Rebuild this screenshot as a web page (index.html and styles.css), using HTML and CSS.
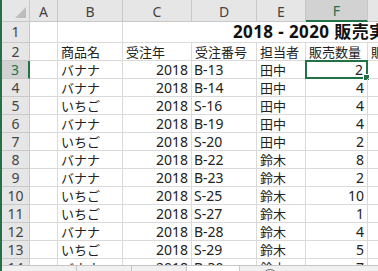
FILE: index.html
```html
<!DOCTYPE html>
<html lang="ja">
<head>
  <meta charset="UTF-8">
  <title>販売実績 - Excel</title>
  <link rel="stylesheet" href="styles.css">
</head>
<body>
  <div class="sheet">
    <div class="grid">
      <!-- column headers -->
      <div class="corner"><span class="tri"></span></div>
      <div class="colhead">A</div>
      <div class="colhead">B</div>
      <div class="colhead">C</div>
      <div class="colhead">D</div>
      <div class="colhead">E</div>
      <div class="colhead sel">F</div>
      <div class="colhead"></div>

      <!-- row 1 -->
      <div class="rowhead">1</div>
      <div class="cell"></div>
      <div class="cell"></div>
      <div class="cell title">2018 - 2020 販売実績</div>

      <!-- row 2 -->
      <div class="rowhead">2</div>
      <div class="cell"></div>
      <div class="cell jp">商品名</div>
      <div class="cell jp">受注年</div>
      <div class="cell jp">受注番号</div>
      <div class="cell jp">担当者</div>
      <div class="cell jp">販売数量</div>
      <div class="cell jp">販売</div>
    </div>

    <div id="rows" class="grid"></div>
  </div>

  <div class="tabbar">
    <div class="tab">三読</div>
    <div class="tab">2018</div>
    <div class="tab">2019</div>
    <div class="tab active">販売</div>
    <div class="addsheet">+</div>
  </div>

  <script>
    const data = [
      [3, "バナナ", 2018, "B-13", "田中", 2],
      [4, "バナナ", 2018, "B-14", "田中", 4],
      [5, "いちご", 2018, "S-16", "田中", 4],
      [6, "バナナ", 2018, "B-19", "田中", 4],
      [7, "いちご", 2018, "S-20", "田中", 2],
      [8, "バナナ", 2018, "B-22", "鈴木", 8],
      [9, "バナナ", 2018, "B-23", "鈴木", 2],
      [10, "いちご", 2018, "S-25", "鈴木", 10],
      [11, "いちご", 2018, "S-27", "鈴木", 1],
      [12, "バナナ", 2018, "B-28", "鈴木", 4],
      [13, "いちご", 2018, "S-29", "鈴木", 5],
      [14, "バナナ", 2018, "B-30", "鈴木", 7]
    ];

    const rows = document.getElementById("rows");
    data.forEach(r => {
      const sel = r[0] === 3;
      rows.innerHTML += `
        <div class="rowhead${sel ? " sel" : ""}">${r[0]}</div>
        <div class="cell"></div>
        <div class="cell jp">${r[1]}</div>
        <div class="cell num">${r[2]}</div>
        <div class="cell">${r[3]}</div>
        <div class="cell jp">${r[4]}</div>
        <div class="cell num${sel ? " active" : ""}">${r[5]}</div>
        <div class="cell"></div>
      `;
    });
  </script>
</body>
</html>
```

FILE: styles.css
```css
* {
  box-sizing: border-box;
}
body {
  margin: 0;
  width: 378px;
  height: 271px;
  overflow: hidden;
  font-family: "Noto Sans", "Noto Sans CJK JP", sans-serif;
  font-size: 14px;
  color: #222;
  background-color: white;
  border-left: 2px solid #217346;
}
.sheet {
  height: 265px;
  overflow: hidden;
}
.grid {
  display: grid;
  grid-template-columns: 28px 28px 65px 69px 65px 49px 62px 30px;
  grid-auto-rows: 18px;
}
.grid:first-child {
  grid-template-rows: 22px 21px 18px;
}
.corner, .colhead, .rowhead {
  background-color: #e6e6e6;
  color: #444;
  border-right: 1px solid #c8c8c8;
  border-bottom: 1px solid #c8c8c8;
}
.corner {
  position: relative;
}
.tri {
  position: absolute;
  right: 3px;
  bottom: 3px;
  width: 0;
  height: 0;
  border-left: 11px solid transparent;
  border-bottom: 11px solid #bdbdbd;
}
.colhead {
  display: flex;
  align-items: center;
  justify-content: center;
  padding-top: 1px;
}
.colhead.sel {
  background-color: #d2d2d2;
  color: #217346;
  border-bottom: 2px solid #217346;
}
.rowhead {
  display: flex;
  align-items: center;
  justify-content: center;
  line-height: 1;
}
.rowhead.sel {
  background-color: #d2d2d2;
  color: #217346;
  border-right: 2px solid #217346;
}
.cell {
  border-right: 1px solid #dadada;
  border-bottom: 1px solid #dadada;
  padding: 0 2px;
  line-height: 17px;
  white-space: nowrap;
  overflow: hidden;
  position: relative;
}
.jp {
  font-family: "Noto Sans CJK JP", sans-serif;
  font-size: 13px;
  padding-left: 3px;
}
.num {
  text-align: right;
  padding-right: 3px;
}
.cell.active {
  border: 2px solid #217346;
  margin: -1px 0 0 -1px;
  line-height: 15px;
  overflow: visible;
}
.cell.active::after {
  content: "";
  position: absolute;
  right: -4px;
  bottom: -4px;
  width: 5px;
  height: 5px;
  background-color: #217346;
  border: 1px solid white;
}
.title {
  grid-column: 4 / -1;
  border-right: none;
  padding-left: 110px;
  font-family: "Noto Sans", "Noto Sans CJK JP", sans-serif;
  font-size: 17px;
  font-weight: bold;
  letter-spacing: 0.4px;
  line-height: 20px;
  color: #111;
}
.tabbar {
  display: flex;
  height: 26px;
  background-color: #f0f0f0;
  border-top: 1px solid #c6c6c6;
  font-family: "Noto Sans CJK JP", sans-serif;
  font-size: 12px;
  color: #444;
}
.tab {
  width: 55px;
  padding: 2px 8px;
  border-right: 1px solid #c6c6c6;
  white-space: nowrap;
}
.tab:first-child {
  width: 75px;
}
.tab.active {
  background-color: white;
  color: #217346;
  font-weight: bold;
  width: 53px;
}
.addsheet {
  margin-left: 22px;
  margin-top: 3px;
  width: 16px;
  height: 16px;
  border: 1px solid #777;
  border-radius: 50%;
  text-align: center;
  line-height: 14px;
  color: #555;
}
```
